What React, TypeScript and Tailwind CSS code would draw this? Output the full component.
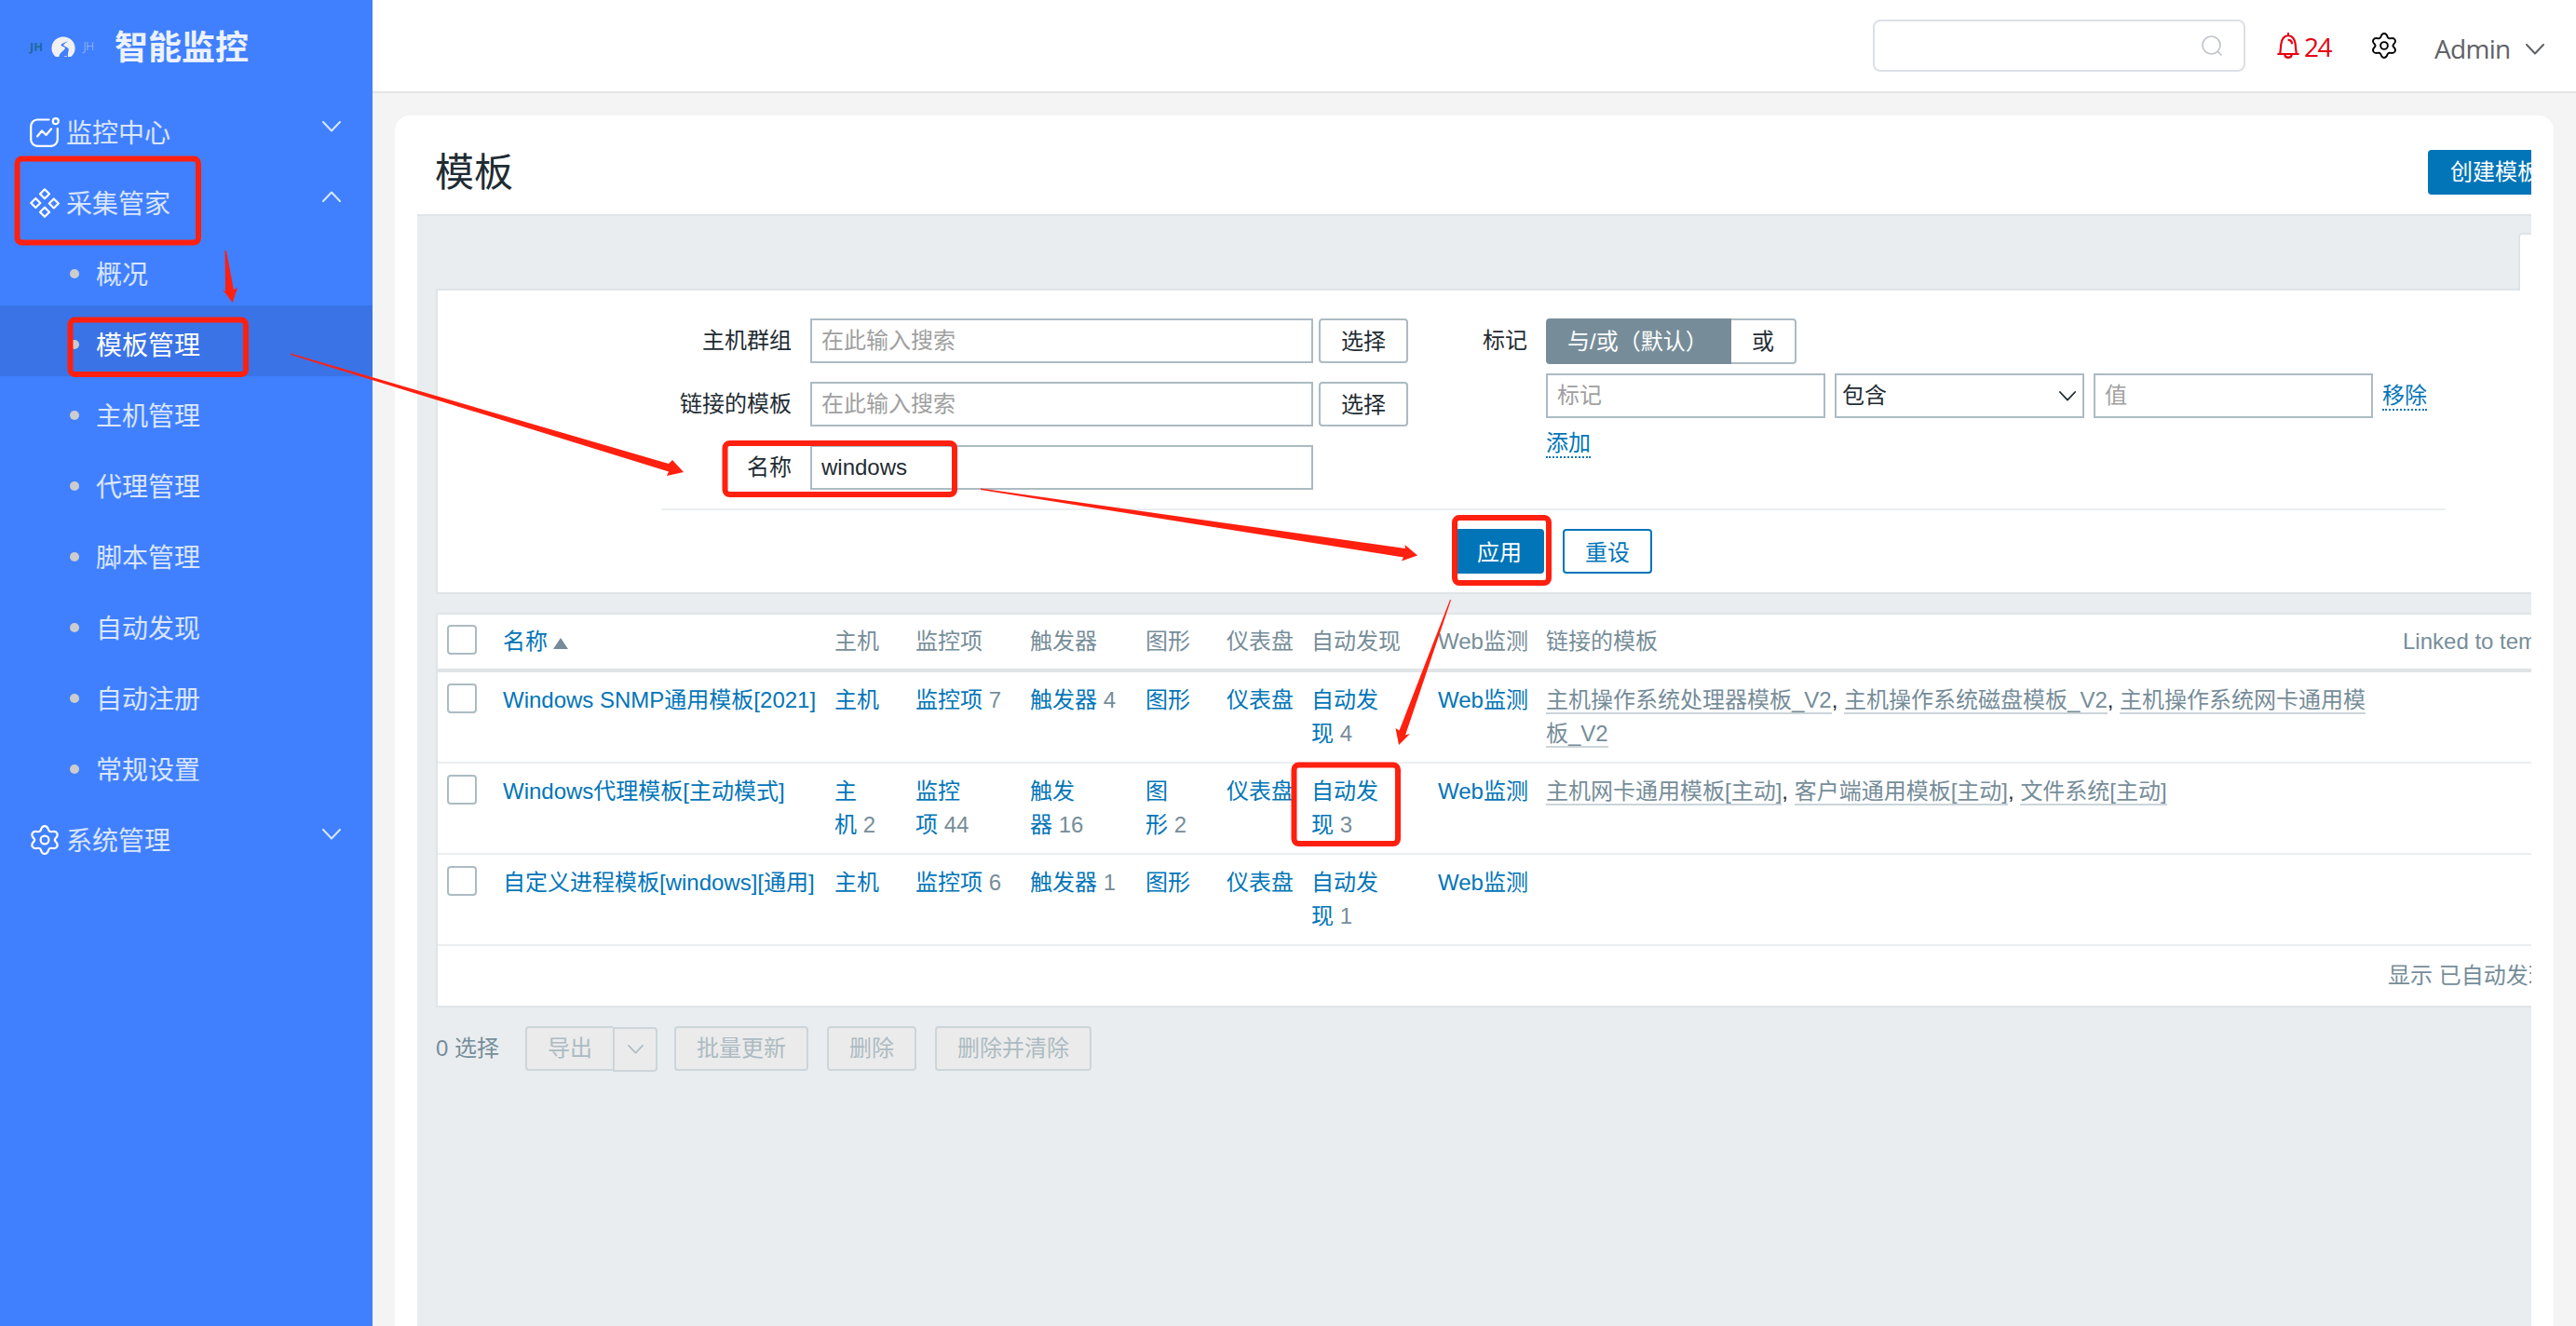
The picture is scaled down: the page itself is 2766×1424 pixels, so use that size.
import clsx from 'clsx'

const subItems = ['概况', '模板管理', '主机管理', '代理管理', '脚本管理', '自动发现', '自动注册', '常规设置']

type Cell = { lines: string[]; count?: number }
type Row = { name: string; cells: Cell[]; linked: string[] }

const rows: Row[] = [
  {
    name: 'Windows SNMP通用模板[2021]',
    cells: [
      { lines: ['主机'] },
      { lines: ['监控项'], count: 7 },
      { lines: ['触发器'], count: 4 },
      { lines: ['图形'] },
      { lines: ['仪表盘'] },
      { lines: ['自动发', '现'], count: 4 },
      { lines: ['Web监测'] },
    ],
    linked: ['主机操作系统处理器模板_V2', '主机操作系统磁盘模板_V2', '主机操作系统网卡通用模板_V2'],
  },
  {
    name: 'Windows代理模板[主动模式]',
    cells: [
      { lines: ['主', '机'], count: 2 },
      { lines: ['监控', '项'], count: 44 },
      { lines: ['触发', '器'], count: 16 },
      { lines: ['图', '形'], count: 2 },
      { lines: ['仪表盘'] },
      { lines: ['自动发', '现'], count: 3 },
      { lines: ['Web监测'] },
    ],
    linked: ['主机网卡通用模板[主动]', '客户端通用模板[主动]', '文件系统[主动]'],
  },
  {
    name: '自定义进程模板[windows][通用]',
    cells: [
      { lines: ['主机'] },
      { lines: ['监控项'], count: 6 },
      { lines: ['触发器'], count: 1 },
      { lines: ['图形'] },
      { lines: ['仪表盘'] },
      { lines: ['自动发', '现'], count: 1 },
      { lines: ['Web监测'] },
    ],
    linked: [],
  },
]

const headers = ['主机', '监控项', '触发器', '图形', '仪表盘', '自动发现', 'Web监测', '链接的模板']

const gridCols = 'grid grid-cols-[58px_356px_87px_123px_124px_87px_91px_136px_116px_920px_300px]'

function Chevron({ up, className }: { up?: boolean; className?: string }) {
  return (
    <svg viewBox="0 0 20 12" className={className} fill="none" stroke="currentColor" strokeWidth="2" strokeLinecap="round" strokeLinejoin="round">
      <path d={up ? 'M1 11L10 1.5L19 11' : 'M1 1L10 10.5L19 1'} />
    </svg>
  )
}

function Gear({ className }: { className?: string }) {
  return (
    <svg viewBox="0 0 32 32" className={className} fill="none" stroke="currentColor" strokeWidth="2.2" strokeLinejoin="round">
      <path d="M11.8 5.6C12.6 2.5 13.4 1.1 16 1.1s3.400 1.400 4.200 4.500c.6 1.200 1.700 1.800 3 1.600c3.100-.9 4.700-.8 6 1.500s.6 3.600-1.800 5.900c-.8 1-.8 1.800 0 2.800c2.400 2.300 3.100 3.600 1.800 5.900s-2.900 2.400-6 1.500c-1.300-.2-2.400.4-3 1.600c-.8 3.100-1.600 4.500-4.200 4.500s-3.400-1.400-4.200-4.500c-.6-1.200-1.700-1.800-3-1.600c-3.100.9-4.700.8-6-1.500s-.6-3.600 1.800-5.900c.8-1 .8-1.800 0-2.800c-2.400-2.300-3.100-3.600-1.800-5.900s2.900-2.400 6-1.500c1.300.2 2.400-.4 3-1.600z" />
      <circle cx="16" cy="16" r="4.400" />
    </svg>
  )
}

function MonitorIcon() {
  return (
    <svg viewBox="0 0 32 32" className="size-8 text-white" fill="none" stroke="currentColor" strokeWidth="2.200" strokeLinecap="round" strokeLinejoin="round">
      <path d="M20.500 2.500H8A7 7 0 0 0 1.200 9.500V24A7 7 0 0 0 8 30.800H23A7 7 0 0 0 29.800 24V12" />
      <circle cx="27.800" cy="4.200" r="3" />
      <path d="M8 20.500L13 14.500L17.500 19L23 12.500" />
    </svg>
  )
}

function DiamondsIcon() {
  return (
    <svg viewBox="0 0 32 32" className="size-8 text-white" fill="none" stroke="currentColor" strokeWidth="2.200" strokeLinejoin="round">
      <path d="M16 1.300L21 6.300L16 11.300L11 6.300Z" />
      <path d="M6.300 11L11.300 16L6.300 21L1.300 16Z" />
      <path d="M25.800 11.500L30.800 16.500L25.800 21.500L20.800 16.500Z" />
      <path d="M16 20.700L21 25.700L16 30.700L11 25.700Z" />
    </svg>
  )
}

function BellIcon() {
  return (
    <svg viewBox="0 0 24 28" className="h-7 w-6" fill="none" stroke="currentColor" strokeWidth="2.200" strokeLinecap="round" strokeLinejoin="round">
      <path d="M12 1v2M1.200 23H22.800M3.200 23C3.600 20 4 16 4.300 12.500C4.800 7 8 3.200 12 3.200S19.200 7 19.700 12.500C20 16 20.400 20 20.800 23" />
      <path d="M12.500 7.800c2 .3 3.200 1.500 3.500 3.500" />
      <path d="M8.200 23.500C8.500 25.700 10 26.800 12 26.800S15.500 25.700 15.800 23.500" />
    </svg>
  )
}

function Sidebar() {
  return (
    <aside className="flex w-[400px] shrink-0 flex-col bg-[#4080ff] font-['Noto_Sans_CJK_SC',sans-serif] text-[28px] text-white/80">
      <div className="flex h-[100px] items-center pl-8">
        <div className="flex w-[69px] items-center justify-between">
          <span className="font-['Open_Sans',sans-serif] text-[13px] leading-none font-bold text-[#1f6a9c]">JH</span>
          <svg viewBox="0 0 26 23" className="mt-px h-[23px] w-[26px]">
            <path d="M5 22C2 20 .4 16.500 .4 13A12.600 12.600 0 0 1 25.600 13C25.600 16.500 24 20 21 22H5Z" fill="#f0f0f0" />
            <path d="M18 5.500C15 6.200 10.300 8 10.500 9.600C10.800 11.300 15 11 14.800 13C14 15.500 9.500 16.500 8 22.500H13.500C13.800 21 16.500 20.800 18 22.500C17.500 19.500 18.300 16.500 18.800 14.500C19 11.500 13.500 10.800 13.300 9.400C13.300 8.200 16 7 18 5.500Z" fill="#4080ff" />
          </svg>
          <span className="font-['Open_Sans',sans-serif] text-[12px] leading-none font-light text-[#b8c8e8]">JH</span>
        </div>
        <h1 className="-mt-1 ml-[22px] text-[36px] leading-none font-bold text-white/90">智能监控</h1>
      </div>
      <div className="flex h-[76px] items-center pl-8">
        <div className="mt-2"><MonitorIcon /></div>
        <span className="mt-1.5 ml-[7px]">监控中心</span>
        <Chevron className="mr-[34px] mb-1 ml-auto h-3 w-5" />
      </div>
      <div className="flex h-[76px] items-center pl-8">
        <div className="mt-2"><DiamondsIcon /></div>
        <span className="mt-1.5 ml-[7px]">采集管家</span>
        <Chevron up className="mr-[34px] mb-1.5 ml-auto h-3 w-5" />
      </div>
      {subItems.map(item => (
        <div
          key={item}
          className={clsx('flex h-[76px] items-center pt-2 pl-[75px]', item === '模板管理' && 'bg-[#3a73e6] text-white')}
        >
          <i className="mr-[18px] size-2.5 rounded-full bg-[#ccc]" />
          <span className="-mt-0.5">{item}</span>
        </div>
      ))}
      <div className="flex h-[76px] items-center pl-8">
        <Gear className="mt-2 size-8 text-white" />
        <span className="mt-1.5 ml-[7px]">系统管理</span>
        <Chevron className="mr-[34px] mb-1 ml-auto h-3 w-5" />
      </div>
    </aside>
  )
}

function TopBar() {
  return (
    <header className="flex h-[100px] items-center justify-end border-b-2 border-[#e6e6e6] bg-white font-['Open_Sans','Noto_Sans',sans-serif] text-[28px]">
      <div className="flex h-14 w-[400px] items-center justify-end rounded-lg border-2 border-[#dcdfe6] pr-[22px]">
        <svg viewBox="0 0 24 24" className="size-6 text-[#c0c4cc]" fill="none" stroke="currentColor" strokeWidth="1.700" strokeLinecap="round">
          <circle cx="11.500" cy="11.500" r="9.500" />
          <path d="M18.500 18.500L22 22" />
        </svg>
      </div>
      <div className="ml-[34px] flex items-center text-[#e60012]">
        <BellIcon />
        <span className="mt-0.5 ml-[5px] w-8 tracking-[-1.5px]">24</span>
      </div>
      <Gear className="ml-10 size-7 text-black" />
      <span className="mt-1.5 ml-10 w-[82px] tracking-[-0.7px] text-[#606266]">Admin</span>
      <Chevron className="mt-2 mr-[34px] ml-4 h-3 w-5 text-[#606266]" />
    </header>
  )
}

const inputCls = 'flex h-12 items-center border-2 border-[#acbbc2] bg-white'
const buttonCls = 'flex h-12 items-center justify-center rounded border-2'
const dottedLink = 'border-b-2 border-dotted border-[#0275b8] pt-0.5 leading-7 text-[#0275b8]'

function FilterRow({ label, placeholder, value }: { label: string; placeholder?: string; value?: string }) {
  return (
    <div className="flex h-12 items-center">
      <span className="mr-5 w-[140px] text-right">{label}</span>
      <div className={clsx(inputCls, 'w-[540px] pl-2.5', !value && 'text-[#a0a0a0]')}>{value || placeholder}</div>
      {!value && <button className={clsx(buttonCls, 'ml-1.5 w-24 border-[#acbbc2] pt-0.5')}>选择</button>}
    </div>
  )
}

function Filter() {
  return (
    <section className="ml-5 h-[328px] border-2 border-r-0 border-[#dfe4e7] bg-white pt-[30px]">
      <div className="ml-60 w-[1916px] border-b-2 border-[#ebeef0] pb-5">
        <div className="flex">
          <div className="flex flex-col gap-5">
            <FilterRow label="主机群组" placeholder="在此输入搜索" />
            <FilterRow label="链接的模板" placeholder="在此输入搜索" />
            <FilterRow label="名称" value="windows" />
          </div>
          <div className="ml-20 flex h-12 items-center">标记</div>
          <div className="ml-5 flex flex-col">
            <div className="flex h-[49px]">
              <span className="flex w-[199px] items-center rounded-l bg-[#768d99] pl-[23px] text-white">与/或（默认）</span>
              <span className="flex w-[70px] items-center justify-center rounded-r border-2 border-l-0 border-[#acbbc2]">或</span>
            </div>
            <div className="mt-2.5 flex items-center">
              <div className={clsx(inputCls, 'w-[300px] pl-2.5 text-[#a0a0a0]')}>标记</div>
              <div className={clsx(inputCls, 'ml-2.5 w-[268px] justify-between pr-[7px] pl-1.5')}>
                包含
                <Chevron className="h-[11px] w-[18px]" />
              </div>
              <div className={clsx(inputCls, 'ml-2.5 w-[300px] pl-2.5 text-[#a0a0a0]')}>值</div>
              <a className={clsx(dottedLink, 'ml-2.5')}>移除</a>
            </div>
            <a className={clsx(dottedLink, 'mt-[11px] self-start')}>添加</a>
          </div>
        </div>
      </div>
      <div className="mt-5 ml-[1092px] flex gap-5">
        <button className={clsx(buttonCls, 'w-24 border-[#0275b8] bg-[#0275b8] pt-1 text-white')}>应用</button>
        <button className={clsx(buttonCls, 'w-24 border-[#0275b8] pt-1 text-[#0275b8]')}>重设</button>
      </div>
    </section>
  )
}

function Checkbox() {
  return <span className="ml-2.5 block size-8 rounded border-2 border-[#acbbc2]" />
}

function TemplateTable() {
  return (
    <section className="mt-5 ml-5 border-2 border-r-0 border-[#dfe4e7] bg-white">
      <div className={clsx(gridCols, 'h-[62px] items-center border-b-4 border-[#dfe4e7] text-[#768d99]')}>
        <div className="-mt-1"><Checkbox /></div>
        <div className="flex items-center pl-3 text-[#0275b8]">
          名称
          <i className="mt-1 ml-1.5 border-x-8 border-b-[12px] border-x-transparent border-b-[#768d99]" />
        </div>
        {headers.map(h => <div key={h} className="pl-3">{h}</div>)}
        <div className="pl-3">Linked to templates</div>
      </div>
      {rows.map(row => (
        <div key={row.name} className={clsx(gridCols, 'h-[98px] border-b-2 border-[#ebeef0] pt-3 leading-9 text-[#0275b8]')}>
          <Checkbox />
          <div className="pl-3">{row.name}</div>
          {row.cells.map((cell, i) => (
            <div key={i} className="pl-3">
              {cell.lines.map((line, n) => (
                <div key={n}>
                  {line}
                  {cell.count !== undefined && n === cell.lines.length - 1 && <span className="text-[#768d99]"> {cell.count}</span>}
                </div>
              ))}
            </div>
          ))}
          <div className="px-3 whitespace-normal text-[#1f2c33]">
            {row.linked.map((name, i) => (
              <span key={name}>
                {i > 0 && ', '}
                <a className="border-b-2 border-[#ccd5d9] text-[#768d99]">{name}</a>
              </span>
            ))}
          </div>
        </div>
      ))}
      <div className="flex h-16 items-center pl-[2094px] text-[#768d99]">显示 已自动发现的 3 中的 3</div>
    </section>
  )
}

function ActionBar() {
  const disabled = 'border-[#ccd5d9] bg-[#ebebeb] text-[#acbbc2]'
  return (
    <div className="mt-5 ml-5 flex h-12 items-center">
      <span className="w-24 text-[#768d99]">0 选择</span>
      <button className={clsx(buttonCls, disabled, 'w-[94px] rounded-r-none border-r-0')}>导出</button>
      <button className={clsx(buttonCls, disabled, 'mt-0.5 w-12 rounded-l-none')}>
        <Chevron className="h-2.5 w-[17px]" />
      </button>
      <button className={clsx(buttonCls, disabled, 'ml-[18px] w-36')}>批量更新</button>
      <button className={clsx(buttonCls, disabled, 'ml-5 w-24')}>删除</button>
      <button className={clsx(buttonCls, disabled, 'ml-5 w-[168px]')}>删除并清除</button>
    </div>
  )
}

// Red walkthrough marks drawn over the page
function Annotations() {
  return (
    <svg viewBox="0 0 2766 1424" className="pointer-events-none absolute inset-0 h-[1424px] w-[2766px]">
      <g fill="none" stroke="#ff2010" strokeWidth="6">
        <rect x="18.500" y="170.500" width="194.500" height="90" rx="5" />
        <rect x="75.500" y="343.500" width="188.500" height="58.500" rx="5" />
        <rect x="778.500" y="476" width="246.500" height="55" rx="5" />
        <rect x="1562" y="556" width="101" height="70" rx="5" />
        <rect x="1389.500" y="821.500" width="111.500" height="84.500" rx="5" />
      </g>
      <g fill="#ff2010">
        <polygon points="241.500,269 243,269 251,311.500 255.300,308.300 249.700,325 239,311 242,312.700" />
        <polygon points="312,379.500 718,498 722,494 734,507 716,511 718,506.500 312,381" />
        <polygon points="1053,524.500 1509,589 1508.500,585 1522,596.600 1505,602.500 1507,598.500 1053,526" />
        <polygon points="1557,644 1558,644.500 1509,789.500 1514,788 1502,800 1498.500,782 1502.500,784.500" />
      </g>
    </svg>
  )
}

export default function App() {
  return (
    <div className="relative flex h-[1424px] w-[2766px] overflow-hidden bg-[#f4f4f4]">
      <Sidebar />
      <div className="flex min-w-0 flex-1 flex-col">
        <TopBar />
        <main className="mx-6 mt-6 flex-1 rounded-t-2xl bg-white px-6">
          <div className="flex h-full w-[2270px] flex-col overflow-hidden bg-[#e9edf0] font-['Liberation_Sans','Noto_Sans_CJK_SC',sans-serif] text-[24px] whitespace-nowrap text-[#1f2c33]">
            <div className="flex h-[106px] shrink-0 items-center bg-white pt-4 pl-[19px]">
              <h2 className="w-[85px] text-[42px]">模板</h2>
              <button className="ml-[2056px] flex h-12 shrink-0 items-center rounded bg-[#0275b8] px-6 text-white">创建模板</button>
            </div>
            <div className="flex h-20 shrink-0 items-end justify-end border-t-2 border-[#dfe4e7]">
              <div className="relative -mb-0.5 h-[62px] w-3.5 rounded-tl border-t-2 border-l-2 border-[#dfe4e7] bg-white" />
            </div>
            <Filter />
            <TemplateTable />
            <ActionBar />
          </div>
        </main>
      </div>
      <Annotations />
    </div>
  )
}
